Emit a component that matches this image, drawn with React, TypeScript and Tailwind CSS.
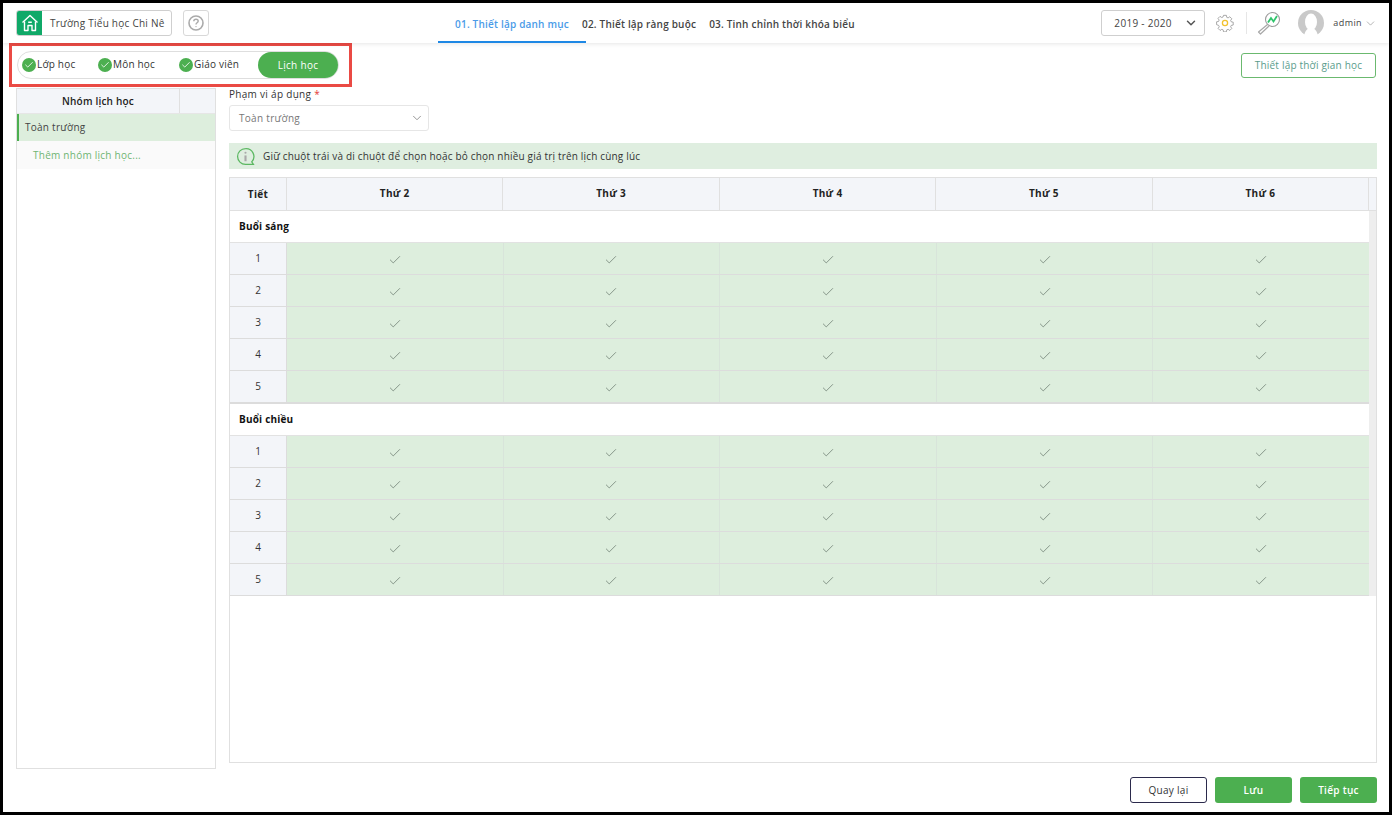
import { Check, ChevronDown } from 'lucide-react';

const days = ['Thứ 2', 'Thứ 3', 'Thứ 4', 'Thứ 5', 'Thứ 6'];
const periods = [1, 2, 3, 4, 5];

function HouseLogo() {
  return (
    <svg width="18" height="18" viewBox="0 0 18 18" fill="none" stroke="white" strokeWidth="1.4" strokeLinejoin="round">
      <path d="M1.5 8.5 9 1.5l7.5 7" />
      <path d="M3.5 7.5V16.5h3.5V11.5h4v5h3.5V7.5" />
      <path d="M7.2 8.2h3.6" />
    </svg>
  );
}

function HelpIcon() {
  return (
    <svg width="18" height="18" viewBox="0 0 18 18" fill="none" stroke="#aaaaaa">
      <circle cx="9" cy="9" r="7" strokeWidth="1.6" />
      <path d="M6.8 7.2C6.8 5.9 7.8 5.2 9 5.2s2.2.8 2.2 1.9c0 1.7-2.2 1.7-2.2 3.4" strokeWidth="1.4" />
      <circle cx="9" cy="12.6" r=".7" fill="#aaaaaa" stroke="none" />
    </svg>
  );
}

function GearIcon() {
  return (
    <svg width="18" height="18" viewBox="0 0 18 18" fill="none">
      <path
        d="M7.5 1.2h3l.4 2.1 1.4.6 1.8-1.2 2.1 2.1-1.2 1.8.6 1.4 2.1.4v3l-2.1.4-.6 1.4 1.2 1.8-2.1 2.1-1.8-1.2-1.4.6-.4 2.1h-3l-.4-2.1-1.4-.6-1.8 1.2-2.1-2.1 1.2-1.8-.6-1.4L.2 11V8l2.1-.4.6-1.4-1.2-1.8 2.1-2.1 1.8 1.2 1.4-.6z"
        stroke="#8f8f8f"
        strokeWidth=".8"
        transform="translate(.4 .2) scale(.95)"
      />
      <circle cx="9" cy="9" r="2.6" stroke="#f2c230" strokeWidth="1.3" />
    </svg>
  );
}

function SearchChartIcon() {
  return (
    <svg width="24" height="24" viewBox="0 0 24 24" fill="none">
      <circle cx="15.5" cy="8.5" r="7" stroke="#9c9c9c" strokeWidth="1.1" />
      <path d="M10.5 13.5 1.5 21l2 2 8.5-8" stroke="#a8a8a8" strokeWidth="1.2" strokeLinejoin="round" />
      <path d="M11 11.5 14 7l2.5 3.5L20 5" stroke="#2fc46b" strokeWidth="1.8" />
    </svg>
  );
}

function AvatarIcon() {
  return (
    <svg width="26" height="26" viewBox="0 0 26 26">
      <circle cx="13" cy="13" r="13" fill="#c9c9c9" />
      <ellipse cx="13" cy="12" rx="6" ry="8.5" fill="white" />
      <path d="M6 26c1-5 3-8 7-8s6 3 7 8z" fill="white" />
    </svg>
  );
}

function InfoIcon() {
  return (
    <svg width="19" height="19" viewBox="0 0 18 18" fill="none" stroke="#5cb862">
      <path d="M9 1.5a7.5 7.5 0 1 0 0 15h7.5l-1.6-2.4A7.5 7.5 0 0 0 9 1.5z" strokeWidth="1.2" />
      <circle cx="9" cy="5.5" r="1" fill="#a9a9a9" stroke="none" />
      <path d="M9 8v5.5" stroke="#a9a9a9" strokeWidth="2" />
    </svg>
  );
}

function StepDone({ label, className }: { label: string; className: string }) {
  return (
    <div className={`flex items-center ${className}`}>
      <span className="flex h-[14px] w-[14px] items-center justify-center rounded-full bg-[#4caf50]">
        <Check size={10} strokeWidth={2} className="text-white" />
      </span>
      <span className="ml-px pb-px text-[10px] tracking-[0.2px] text-[#333]">{label}</span>
    </div>
  );
}

function PeriodRows() {
  return (
    <>
      {periods.map((p) => (
        <div key={p} className="flex h-8 border-b border-[#dcdcdc]">
          <div className="flex w-[57px] shrink-0 items-center justify-center border-r border-[#dcdcdc] bg-[#f3f5f9] text-[10px] text-[#333]">
            {p}
          </div>
          {days.map((d) => (
            <div key={d} className="flex flex-1 items-center justify-center border-r border-[#d8e4da] bg-[#ddeedd] pt-[3px] last:border-r-0">
              <Check size={14} strokeWidth={1.3} className="text-[#6b7b6f]" />
            </div>
          ))}
        </div>
      ))}
    </>
  );
}

function SessionRow({ label }: { label: string }) {
  return (
    <div className="flex h-8 items-center border-b border-[#e2e2e2] pl-[9px] text-[10px] font-bold tracking-[0.2px] text-[#111]">
      {label}
    </div>
  );
}

export default function App() {
  return (
    <div className="flex h-[815px] w-[1392px] flex-col overflow-hidden border-[3px] border-black bg-white font-['Open_Sans',sans-serif] text-[#333]">
      {/* Header */}
      <header className="relative z-10 flex h-10 shrink-0 items-center pl-[13px] pr-[12px] shadow-[0_1px_4px_rgba(0,0,0,0.1)]">
        <div className="flex h-[26px] w-[156px] items-center overflow-hidden rounded-[3px] border border-[#cfcfcf]">
          <div className="flex h-full w-[25px] shrink-0 items-center justify-center bg-[#0fa968]">
            <HouseLogo />
          </div>
          <span className="ml-2 whitespace-nowrap text-[10px] tracking-[0.25px] text-[#444]">Trường Tiểu học Chi Nê</span>
        </div>
        <div className="ml-[11px] flex h-[26px] w-[26px] items-center justify-center rounded-[3px] border border-[#d8d8d8]">
          <HelpIcon />
        </div>

        {/* Steps */}
        <nav className="ml-[229px] flex h-full items-center whitespace-nowrap text-[10px] font-semibold tracking-[0.2px]">
          <div className="flex h-full w-[148px] items-center justify-center border-b-2 border-[#1e88e5] pt-[5px] text-[#4a9be8]">
            01. Thiết lập danh mục
          </div>
          <div className="-ml-1 pt-[3px] text-[#444]">02. Thiết lập ràng buộc</div>
          <div className="ml-[13px] pt-[3px] text-[#444]">03. Tinh chỉnh thời khóa biểu</div>
        </nav>

        <div className="ml-auto flex items-center">
          <div className="flex h-[26px] w-[104px] items-center justify-between rounded-[3px] border border-[#cfcfcf] pl-[12px] pr-[6px] text-[10px] tracking-[0.3px] text-[#444]">
            2019 - 2020
            <ChevronDown size={14} strokeWidth={2.5} className="text-[#555]" />
          </div>
          <div className="ml-[11px]">
            <GearIcon />
          </div>
          <div className="ml-3 h-[22px] w-px bg-[#e6e6e6]" />
          <div className="ml-[10px]">
            <SearchChartIcon />
          </div>
          <div className="ml-[17px]">
            <AvatarIcon />
          </div>
          <span className="ml-[9px] text-[9px] tracking-[0.4px] text-[#444]">admin</span>
          <ChevronDown size={13} strokeWidth={1} className="ml-[2px] text-[#777]" />
        </div>
      </header>

      {/* Toolbar */}
      <div className="flex h-[45px] shrink-0 items-start justify-between pl-[6px] pr-[13px]">
        <div className="h-[44px] w-[343px] border-[3px] border-[#ea4a44] pl-[5px] pt-[5px]">
          <div className="flex h-[28px] w-[322px] items-center rounded-full border border-[#dedede] pl-1">
            <StepDone label="Lớp học" className="w-[76px]" />
            <StepDone label="Môn học" className="w-[81px]" />
            <StepDone label="Giáo viên" className="w-[79px]" />
            <div className="flex h-[26px] w-20 items-center justify-center rounded-full bg-[#4caf50] pt-px text-[10px] font-medium tracking-[0.3px] text-white">
              Lịch học
            </div>
          </div>
        </div>
        <button className="mt-[10px] h-[25px] w-[135px] rounded-[3px] border border-[#6bb96f] text-[10px] tracking-[0.2px] text-[#5a9c8c]">
          Thiết lập thời gian học
        </button>
      </div>

      {/* Body */}
      <div className="flex min-h-0 flex-1 pl-[13px] pr-3">
        <aside className="mb-[43px] flex w-[200px] shrink-0 flex-col border border-[#e0e0e0]">
          <div className="flex h-[25px] border-b border-[#e6e6e6] bg-[#f3f5f9]">
            <div className="flex w-[163px] items-center justify-center border-r border-[#e0e0e0] text-[10px] font-semibold tracking-[0.2px] text-[#222]">
              Nhóm lịch học
            </div>
          </div>
          <div className="flex h-[27px] items-center border-l-2 border-[#4caf50] bg-[#ddeedd] pl-[6px] text-[10px] tracking-[0.25px] text-[#444]">
            Toàn trường
          </div>
          <div className="flex h-7 items-center bg-[#fafafa] pl-4 text-[10px] tracking-[0.25px] text-[#6fb573]">
            Thêm nhóm lịch học...
          </div>
        </aside>

        <main className="ml-[13px] flex min-w-0 flex-1 flex-col">
          <label className="-mt-px text-[10px] leading-[14px] tracking-[0.3px] text-[#333]">
            Phạm vi áp dụng <span className="text-[#e53935]">*</span>
          </label>
          <div className="mt-1 flex h-[26px] w-[200px] items-center justify-between rounded-[3px] border border-[#e6e6e6] pl-[9px] pr-1 text-[10px] tracking-[0.3px] text-[#777]">
            Toàn trường
            <ChevronDown size={14} strokeWidth={1.5} className="text-[#888]" />
          </div>
          <div className="mt-3 flex h-[26px] items-center bg-[#dfeee0] pl-[7px] text-[10px] tracking-[0.18px] text-[#333]">
            <InfoIcon />
            <span className="ml-2">Giữ chuột trái và di chuột để chọn hoặc bỏ chọn nhiều giá trị trên lịch cùng lúc</span>
          </div>

          {/* Schedule table */}
          <div className="mt-2 h-[586px] border border-[#e0e0e0]">
            <div className="flex h-[33px] border-b border-[#e0e0e0] bg-[#f3f5f9] pr-[7px] text-[10px] font-bold text-[#222]">
              <div className="flex w-[57px] shrink-0 items-center justify-center border-r border-[#e0e0e0] pt-px tracking-[0.3px]">Tiết</div>
              {days.map((d) => (
                <div key={d} className="flex flex-1 items-center justify-center border-r border-[#e0e0e0] pb-[2px] tracking-[0.3px]">
                  {d}
                </div>
              ))}
            </div>
            <div className="flex">
              <div className="flex-1">
                <SessionRow label="Buổi sáng" />
                <PeriodRows />
                <div className="h-px bg-[#dcdcdc]" />
                <SessionRow label="Buổi chiều" />
                <PeriodRows />
              </div>
              <div className="w-[7px] shrink-0 bg-[#eeeeee]" />
            </div>
          </div>

          {/* Footer buttons */}
          <div className="mt-[14px] flex justify-end gap-2">
            <button className="h-[26px] w-[77px] rounded-[3px] border border-[#2b2a4c] text-[10px] tracking-[0.3px] text-[#333]">
              Quay lại
            </button>
            <button className="h-[26px] w-[77px] rounded-[3px] bg-[#4caf50] text-[10px] font-semibold tracking-[0.3px] text-white">
              Lưu
            </button>
            <button className="h-[26px] w-[77px] rounded-[3px] bg-[#4caf50] text-[10px] font-semibold tracking-[0.3px] text-white">
              Tiếp tục
            </button>
          </div>
        </main>
      </div>
    </div>
  );
}
